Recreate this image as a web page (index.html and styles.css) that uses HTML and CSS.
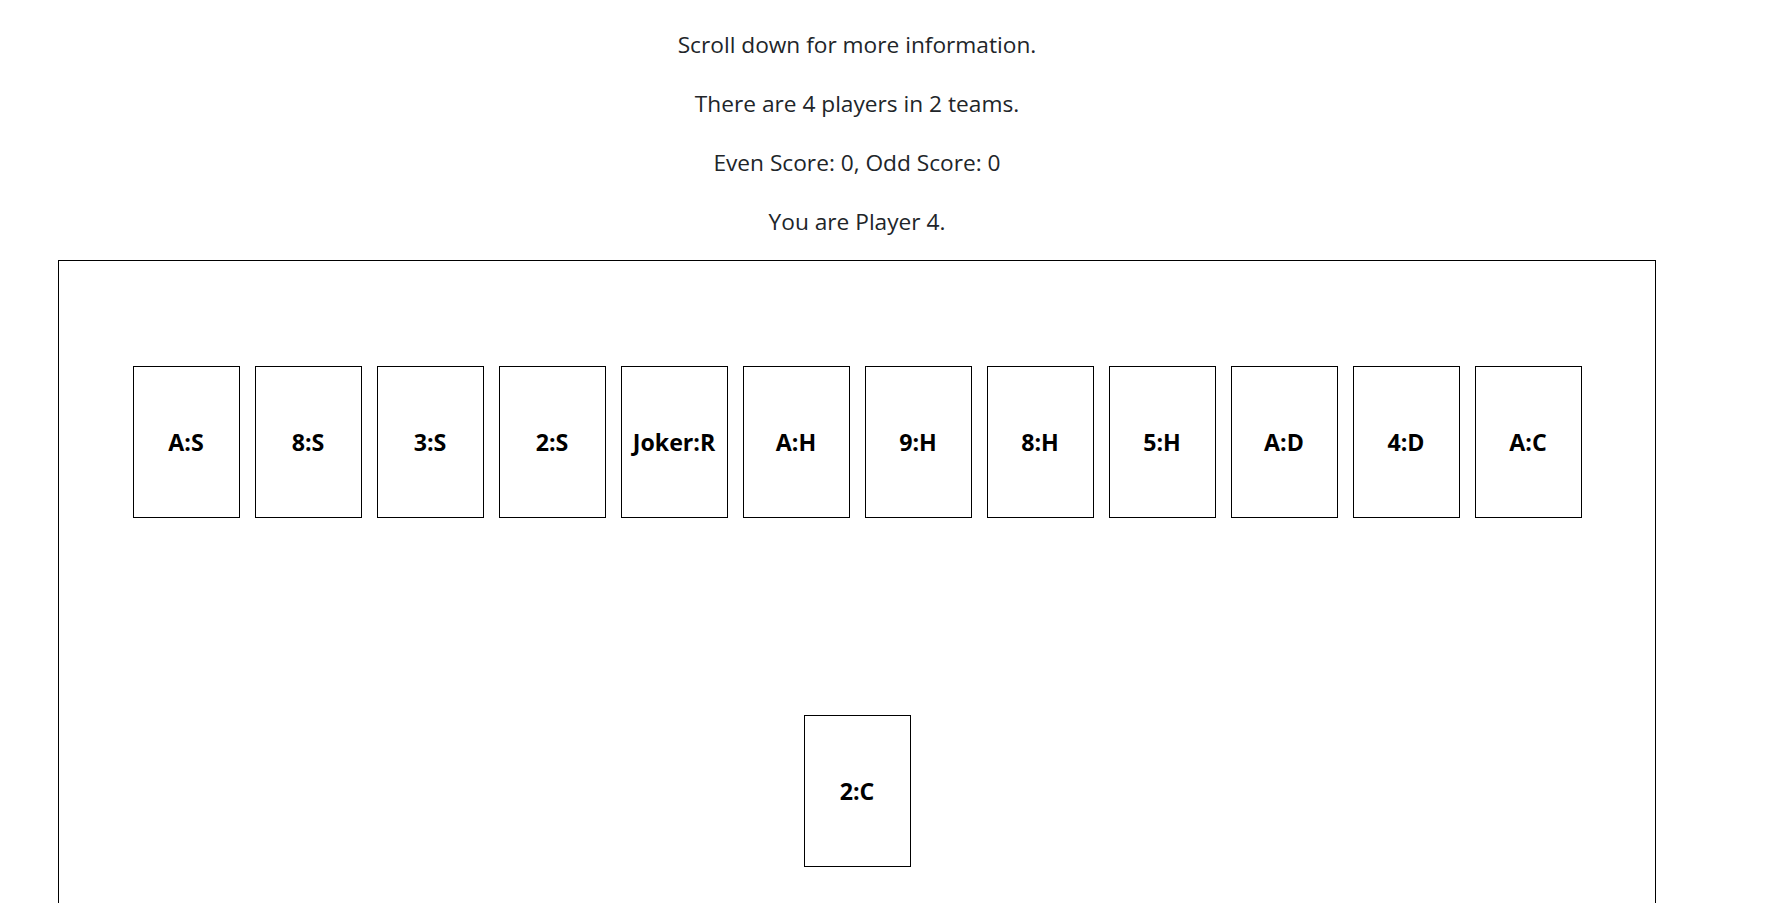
FILE: index.html
```html
<!DOCTYPE html>
<html>
<head>
<meta charset="utf-8">
<link rel="stylesheet" href="styles.css">
</head>
<body>
<div class="page">
  <div class="info">
    <p>Scroll down for more information.</p>
    <p>There are 4 players in 2 teams.</p>
    <p>Even Score: 0, Odd Score: 0</p>
    <p>You are Player 4.</p>
  </div>
  <div class="board">
    <div class="hand">
      <div class="card">A:S</div>
      <div class="card">8:S</div>
      <div class="card">3:S</div>
      <div class="card">2:S</div>
      <div class="card">Joker:R</div>
      <div class="card">A:H</div>
      <div class="card">9:H</div>
      <div class="card">8:H</div>
      <div class="card">5:H</div>
      <div class="card">A:D</div>
      <div class="card">4:D</div>
      <div class="card">A:C</div>
    </div>
    <div class="played">
      <div class="card">2:C</div>
    </div>
  </div>
</div>
</body>
</html>
```
FILE: styles.css
```css
html, body {
  margin: 0;
  padding: 0;
  background: #fff;
}
body {
  font-family: "Open Sans", "Noto Sans", sans-serif;
  color: #212529;
  overflow: hidden;
}
.page {
  width: 1598px;
  margin-left: 58px;
  padding-top: 30px;
}
.info {
  display: flex;
  flex-direction: column;
  align-items: center;
  gap: 29px;
}
.info p {
  margin: 0;
  font-size: 22.7px;
  line-height: 30px;
  text-align: center;
}
.board {
  margin-top: 23px;
  border: 1px solid #000;
  height: 760px;
  padding-top: 105px;
  box-sizing: border-box;
  display: flex;
  flex-direction: column;
  align-items: center;
  gap: 197px;
}
.hand {
  display: flex;
  gap: 15px;
  justify-content: center;
}
.played {
  display: flex;
  justify-content: center;
}
.card {
  width: 105px;
  height: 150px;
  border: 1px solid #000;
  display: flex;
  align-items: center;
  justify-content: center;
  font-weight: bold;
  font-size: 23.2px;
  color: #000;
}
```
